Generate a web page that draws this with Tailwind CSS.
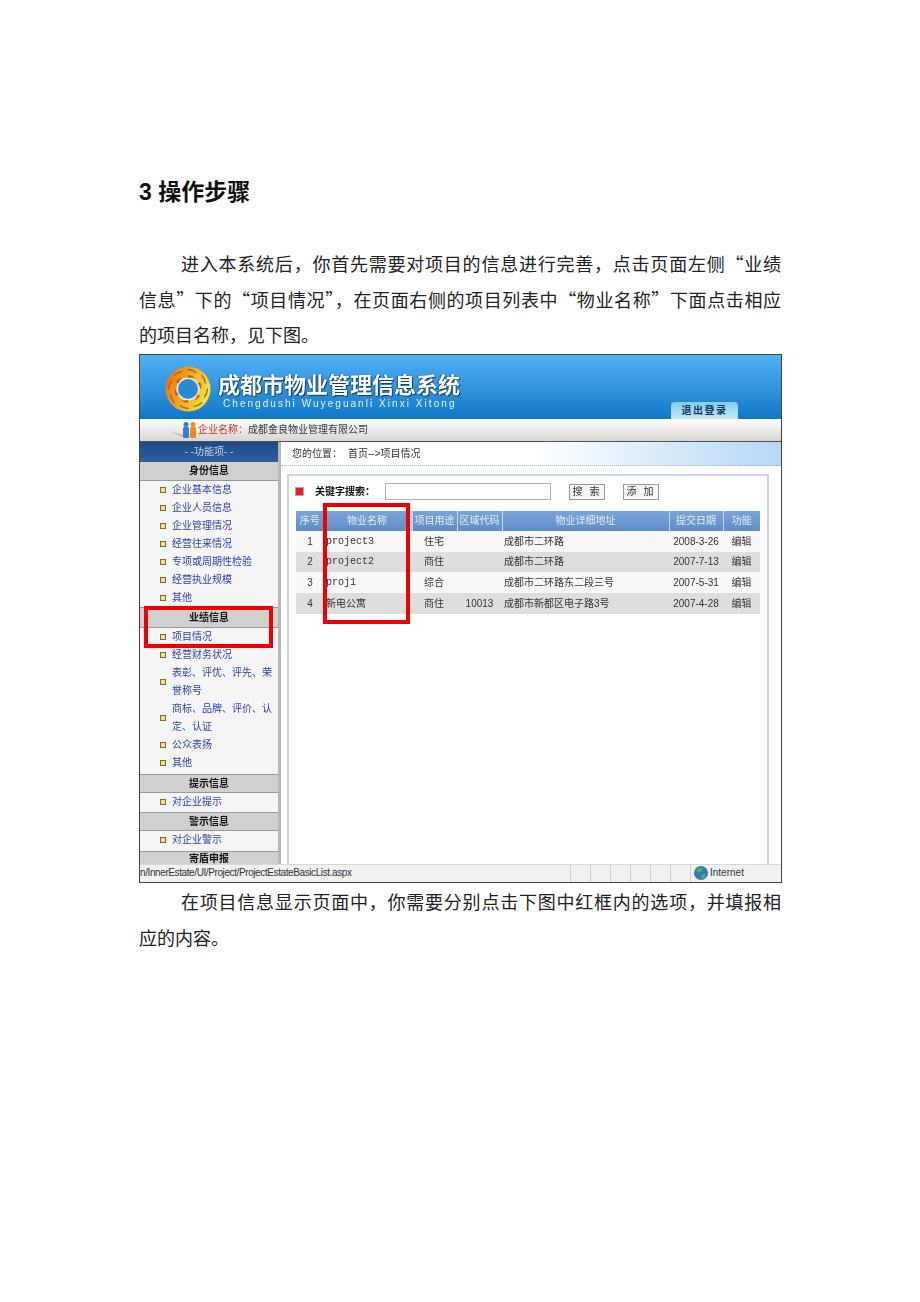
<!DOCTYPE html>
<html lang="zh-CN">
<head>
    <meta charset="utf-8">
    <title>操作步骤</title>
    <script src="https://cdn.jsdelivr.net/npm/@tailwindcss/browser@4"></script>
</head>
<body class="bg-white font-['Liberation_Sans','Noto_Sans_CJK_SC',sans-serif] text-black">
<div class="w-[920px] h-[1302px] overflow-hidden pl-[139px] pt-[177px]">

    <!-- document text -->
    <h1 class="h-[30px] text-[23px] leading-[31px] font-bold text-[#111]">3 操作步骤</h1>
    <div class="w-[642px] mt-[39px] text-[18px] leading-[35.6px] text-[#222] font-['Noto_Sans_CJK_SC',serif]">
        <p class="ml-[42px] text-justify [text-align-last:justify]">进入本系统后，你首先需要对项目的信息进行完善，点击页面左侧“业绩</p>
        <p class="text-justify [text-align-last:justify]">信息”下的“项目情况”，在页面右侧的项目列表中“物业名称”下面点击相应</p>
        <p>的项目名称，见下图。</p>
    </div>

    <!-- screenshot of the system -->
    <div class="relative w-[643px] h-[529px] mt-[1px] border border-[#3c4650] flex flex-col overflow-hidden text-[10px] leading-[18px] text-[#333] blur-[0.35px]">

        <!-- header -->
        <div class="relative shrink-0 h-[64px] bg-gradient-to-b from-[#4fb2f5] to-[#0a78c8] flex items-start pl-[25px] pt-[11px]">
            <svg class="w-[46px] h-[46px] shrink-0" viewBox="0 0 46 46">
                <defs>
                    <linearGradient id="ring" x1="0" y1="0.3" x2="1" y2="0.7">
                        <stop offset="0%" stop-color="#ee7412"/>
                        <stop offset="55%" stop-color="#f7b522"/>
                        <stop offset="100%" stop-color="#f9e845"/>
                    </linearGradient>
                    <path id="dash" d="M23 3.5q5 .5 8 3" fill="none" stroke="#9a6a20" stroke-width="1.3" stroke-linecap="round"/>
                    <path id="blade" d="M23 12q4 0 7 3-4-1-7 0z" fill="#c45c10"/>
                </defs>
                <circle cx="23" cy="23" r="22.5" fill="url(#ring)"/>
                <use href="#dash"/>
                <use href="#dash" transform="rotate(45 23 23)"/>
                <use href="#dash" transform="rotate(90 23 23)"/>
                <use href="#dash" transform="rotate(135 23 23)"/>
                <use href="#dash" transform="rotate(180 23 23)"/>
                <use href="#dash" transform="rotate(225 23 23)"/>
                <use href="#dash" transform="rotate(270 23 23)"/>
                <use href="#dash" transform="rotate(315 23 23)"/>
                <circle cx="23" cy="23" r="11.5" fill="#dfeef8"/>
                <circle cx="23" cy="23" r="10" fill="#2c8ad2"/>
                <use href="#blade" transform="translate(0 -3)"/>
                <use href="#blade" transform="rotate(60 23 23) translate(0 -3)"/>
                <use href="#blade" transform="rotate(120 23 23) translate(0 -3)"/>
                <use href="#blade" transform="rotate(180 23 23) translate(0 -3)"/>
                <use href="#blade" transform="rotate(240 23 23) translate(0 -3)"/>
                <use href="#blade" transform="rotate(300 23 23) translate(0 -3)"/>
            </svg>
            <div class="ml-[7px] text-white">
                <div class="text-[22px] leading-[26px] mt-[7px] font-bold whitespace-nowrap [text-shadow:1px_1px_1px_#0a3c68,-1px_0_1px_#0a5c98]">成都市物业管理信息系统</div>
                <div class="ml-[5px] text-[10px] leading-[12px] -mt-[1px] tracking-[2.05px] whitespace-nowrap text-[#e6f3fc]">Chengdushi Wuyeguanli Xinxi Xitong</div>
            </div>
            <div class="absolute left-[531px] top-[47px] w-[67px] h-[17px] rounded-t-[4px] bg-gradient-to-b from-[#7fcdf0] to-[#c4e9f6] text-center text-[10px] leading-[17px] font-bold tracking-[1.5px] text-[#14385e]">退出登录</div>
        </div>

        <!-- company strip -->
        <div class="shrink-0 h-[23px] bg-gradient-to-b from-white to-[#d9d5d1] border-b border-[#49525c] flex items-center pl-[29px] pt-[1px]">
            <svg class="w-[28px] h-[16px] shrink-0" viewBox="0 0 28 16">
                <path d="M0 9l14 4v2z" fill="#b9b5b0"/>
                <circle cx="17" cy="2.5" r="2.5" fill="#2d7fd0"/>
                <rect x="14" y="5" width="6" height="11" rx="1.5" fill="#2d7fd0"/>
                <circle cx="24" cy="2.5" r="2.5" fill="#ee8a1c"/>
                <rect x="21" y="5" width="6" height="11" rx="1.5" fill="#ee8a1c"/>
            </svg>
            <span class="ml-[1px] text-[#d3331f]">企业名称：</span><span class="text-[#333]">成都金良物业管理有限公司</span>
        </div>

        <!-- main -->
        <div class="flex-1 flex min-h-0 overflow-hidden">
            <!-- side menu -->
            <div class="w-[141px] shrink-0 bg-[#f5f5f5] border-r-[3px] border-[#b7b7b7] text-[#2b3fb0] overflow-hidden">
                <div class="h-[20px] bg-gradient-to-b from-[#1d4a86] to-[#2c5f9e] text-center leading-[20px] text-[#c9d6e6]">- -功能项- -</div>
                <div class="h-[19px] bg-[#d0d0d0] border-b border-[#999] text-center leading-[18px] font-bold text-[#111]">身份信息</div>
                <div class="flex flex-col">
                    <div class="flex items-center h-[18px]"><span class="ml-[20px] mr-[6px] w-[6px] h-[6px] border border-[#7c6a32] bg-[#f4e27a]"></span>企业基本信息</div>
                    <div class="flex items-center h-[18px]"><span class="ml-[20px] mr-[6px] w-[6px] h-[6px] border border-[#7c6a32] bg-[#f4e27a]"></span>企业人员信息</div>
                    <div class="flex items-center h-[18px]"><span class="ml-[20px] mr-[6px] w-[6px] h-[6px] border border-[#7c6a32] bg-[#f4e27a]"></span>企业管理情况</div>
                    <div class="flex items-center h-[18px]"><span class="ml-[20px] mr-[6px] w-[6px] h-[6px] border border-[#7c6a32] bg-[#f4e27a]"></span>经营往来情况</div>
                    <div class="flex items-center h-[18px]"><span class="ml-[20px] mr-[6px] w-[6px] h-[6px] border border-[#7c6a32] bg-[#f4e27a]"></span>专项或周期性检验</div>
                    <div class="flex items-center h-[18px]"><span class="ml-[20px] mr-[6px] w-[6px] h-[6px] border border-[#7c6a32] bg-[#f4e27a]"></span>经营执业规模</div>
                    <div class="flex items-center h-[18px]"><span class="ml-[20px] mr-[6px] w-[6px] h-[6px] border border-[#7c6a32] bg-[#f4e27a]"></span>其他</div>
                </div>
                <div class="h-[21px] bg-[#d0d0d0] border-y border-[#999] text-center leading-[19px] font-bold text-[#111]">业绩信息</div>
                <div class="flex flex-col">
                    <div class="flex items-center h-[18px]"><span class="ml-[20px] mr-[6px] w-[6px] h-[6px] border border-[#7c6a32] bg-[#f4e27a]"></span>项目情况</div>
                    <div class="flex items-center h-[18px]"><span class="ml-[20px] mr-[6px] w-[6px] h-[6px] border border-[#7c6a32] bg-[#f4e27a]"></span>经营财务状况</div>
                    <div class="flex items-center h-[36px]"><span class="shrink-0 ml-[20px] mr-[6px] w-[6px] h-[6px] border border-[#7c6a32] bg-[#f4e27a]"></span><span>表彰、评优、评先、荣誉称号</span></div>
                    <div class="flex items-center h-[36px]"><span class="shrink-0 ml-[20px] mr-[6px] w-[6px] h-[6px] border border-[#7c6a32] bg-[#f4e27a]"></span><span>商标、品牌、评价、认定、认证</span></div>
                    <div class="flex items-center h-[18px]"><span class="ml-[20px] mr-[6px] w-[6px] h-[6px] border border-[#7c6a32] bg-[#f4e27a]"></span>公众表扬</div>
                    <div class="flex items-center h-[18px]"><span class="ml-[20px] mr-[6px] w-[6px] h-[6px] border border-[#7c6a32] bg-[#f4e27a]"></span>其他</div>
                </div>
                <div class="mt-[2px] h-[19px] bg-[#d0d0d0] border-y border-[#999] text-center leading-[17px] font-bold text-[#111]">提示信息</div>
                <div class="flex items-center h-[18px]"><span class="ml-[20px] mr-[6px] w-[6px] h-[6px] border border-[#7c6a32] bg-[#f4e27a]"></span>对企业提示</div>
                <div class="mt-[1px] h-[19px] bg-[#d0d0d0] border-y border-[#999] text-center leading-[17px] font-bold text-[#111]">警示信息</div>
                <div class="flex items-center h-[18px]"><span class="ml-[20px] mr-[6px] w-[6px] h-[6px] border border-[#7c6a32] bg-[#f4e27a]"></span>对企业警示</div>
                <div class="mt-[2px] h-[19px] bg-[#d0d0d0] border-y border-[#999] text-center leading-[14px] font-bold text-[#111]">寄盾申报</div>
            </div>

            <!-- content -->
            <div class="flex-1 min-w-0 flex flex-col">
                <div class="shrink-0 h-[24px] pl-[11px] leading-[23px] bg-gradient-to-r from-white via-white to-[#b5d8f5] border-b border-dotted border-[#b4b4b4]">您的位置：<span class="ml-[6px]">首页--&gt;项目情况</span></div>
                <div class="flex-1 ml-[6px] mr-[12px] mt-[8px] border-x-2 border-t-2 border-[#c5d6ee] pl-[7px] pr-[8px]">
                    <div class="flex items-center h-[31px] -ml-[1px] pt-[1px] text-[#333]">
                        <span class="w-[9px] h-[9px] bg-[#e0202a] border border-[#c9a0a0]"></span>
                        <span class="ml-[11px] w-[70px] font-bold text-[#111]">关键字搜索：</span>
                        <span class="w-[166px] h-[17px] border border-[#a9b4bc] bg-white"></span>
                        <span class="ml-[18px] w-[36px] h-[16px] border border-[#9a9a9a] bg-[#f6f6f6] text-center leading-[14px] tracking-[2px]">搜 索</span>
                        <span class="ml-[18px] w-[36px] h-[16px] border border-[#9a9a9a] bg-[#f6f6f6] text-center leading-[14px] tracking-[2px]">添 加</span>
                    </div>
                    <table class="mt-[4px] w-[464px] table-fixed border-collapse text-[#333]">
                        <colgroup>
                            <col class="w-[28px]"><col class="w-[87px]"><col class="w-[46px]"><col class="w-[45px]"><col class="w-[167px]"><col class="w-[54px]"><col class="w-[37px]">
                        </colgroup>
                        <thead>
                            <tr class="h-[20px] bg-gradient-to-b from-[#7aa5d8] to-[#5d8dc8] text-[#e4edf7] text-center">
                                <th class="font-normal border-r border-[#c3d8ee]">序号</th>
                                <th class="font-normal border-r-[3px] border-[#c3d8ee]">物业名称</th>
                                <th class="font-normal border-r border-[#c3d8ee]">项目用途</th>
                                <th class="font-normal border-r border-[#c3d8ee]">区域代码</th>
                                <th class="font-normal border-r border-[#c3d8ee]">物业详细地址</th>
                                <th class="font-normal border-r border-[#c3d8ee]">提交日期</th>
                                <th class="font-normal">功能</th>
                            </tr>
                        </thead>
                        <tbody class="text-center [&_td]:pt-[1px]">
                            <tr class="h-[21px] bg-[#f8f8f8]">
                                <td>1</td><td class="text-left pl-[2px] font-['Liberation_Mono','Noto_Sans_CJK_SC',monospace]">project3</td><td>住宅</td><td></td><td class="text-left pl-[2px]">成都市二环路</td><td>2008-3-26</td><td>编辑</td>
                            </tr>
                            <tr class="h-[20px] bg-[#dedede]">
                                <td>2</td><td class="text-left pl-[2px] font-['Liberation_Mono','Noto_Sans_CJK_SC',monospace]">project2</td><td>商住</td><td></td><td class="text-left pl-[2px]">成都市二环路</td><td>2007-7-13</td><td>编辑</td>
                            </tr>
                            <tr class="h-[21px] bg-[#f8f8f8]">
                                <td>3</td><td class="text-left pl-[2px] font-['Liberation_Mono','Noto_Sans_CJK_SC',monospace]">proj1</td><td>综合</td><td></td><td class="text-left pl-[2px]">成都市二环路东二段三号</td><td>2007-5-31</td><td>编辑</td>
                            </tr>
                            <tr class="h-[21px] bg-[#dedede]">
                                <td>4</td><td class="text-left pl-[2px]">新电公寓</td><td>商住</td><td>10013</td><td class="text-left pl-[2px]">成都市新都区电子路3号</td><td>2007-4-28</td><td>编辑</td>
                            </tr>
                        </tbody>
                    </table>
                </div>
            </div>
        </div>

        <!-- status bar -->
        <div class="shrink-0 h-[18px] bg-[#f1f1f1] border-t border-[#d8d8d8] flex items-center justify-between leading-[16px] text-[#333]">
            <span class="whitespace-nowrap tracking-[-0.4px]">n/InnerEstate/UI/Project/ProjectEstateBasicList.aspx</span>
            <div class="flex items-center h-full">
                <span class="w-[20px] h-full border-l border-[#cfcfcf]"></span>
                <span class="w-[20px] h-full border-l border-[#cfcfcf]"></span>
                <span class="w-[20px] h-full border-l border-[#cfcfcf]"></span>
                <span class="w-[20px] h-full border-l border-[#cfcfcf]"></span>
                <span class="w-[20px] h-full border-l border-[#cfcfcf]"></span>
                <span class="w-[20px] h-full border-l border-[#cfcfcf]"></span>
                <span class="w-[4px] h-full border-l border-[#cfcfcf]"></span>
                <svg class="w-[14px] h-[14px]" viewBox="0 0 13 13">
                    <circle cx="6.5" cy="6.5" r="6.5" fill="#2a7fb8"/>
                    <path d="M2 4q3-3 6-2l-1 3-3 1zM7 8l4-1-1 4-3 1z" fill="#58b04a"/>
                </svg>
                <span class="ml-[2px] w-[71px]">Internet</span>
            </div>
        </div>

        <!-- red highlight boxes -->
        <div class="absolute left-[4px] top-[251px] w-[129px] h-[42px] border-4 border-[#f00000]"></div>
        <div class="absolute left-[183px] top-[148px] w-[87px] h-[121px] border-4 border-[#f00000]"></div>
    </div>

    <div class="w-[642px] text-[18px] leading-[36px] text-[#222] font-['Noto_Sans_CJK_SC',serif]">
        <p class="ml-[42px] text-justify [text-align-last:justify]">在项目信息显示页面中，你需要分别点击下图中红框内的选项，并填报相</p>
        <p>应的内容。</p>
    </div>
</div>
</body>
</html>
